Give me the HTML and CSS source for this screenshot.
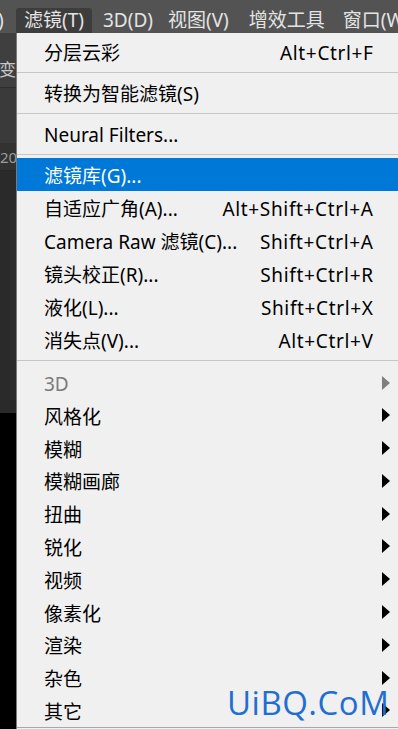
FILE: index.html
```html
<!DOCTYPE html>
<html lang="zh-CN">
<head>
<meta charset="utf-8">
<link rel="stylesheet" href="styles.css">
</head>
<body>
<div class="app">
  <div class="menubar">
    <span class="mb-item mb-cut">)</span>
    <span class="mb-item mb-active">滤镜(T)</span>
    <span class="mb-item mb-3d">3D(D)</span>
    <span class="mb-item mb-view">视图(V)</span>
    <span class="mb-item mb-plug">增效工具</span>
    <span class="mb-item mb-win">窗口(W)</span>
  </div>
  <div class="main">
    <div class="strip">
      <div class="strip-opt"><span class="strip-text">变</span></div>
      <div class="strip-opt2"></div>
      <div class="strip-ruler"><span class="ruler-text">20</span></div>
      <div class="strip-canvas"></div>
      <div class="strip-black"></div>
    </div>
    <div class="menu">
      <div class="row"><span class="label">分层云彩</span><span class="key">Alt+Ctrl+F</span><span class="sub"></span></div>
      <div class="sep"></div>
      <div class="row"><span class="label">转换为智能滤镜(S)</span><span class="key"></span><span class="sub"></span></div>
      <div class="sep"></div>
      <div class="row"><span class="label">Neural Filters...</span><span class="key"></span><span class="sub"></span></div>
      <div class="sep"></div>
      <div class="row hl"><span class="label">滤镜库(G)...</span><span class="key"></span><span class="sub"></span></div>
      <div class="row"><span class="label">自适应广角(A)...</span><span class="key">Alt+Shift+Ctrl+A</span><span class="sub"></span></div>
      <div class="row"><span class="label">Camera Raw 滤镜(C)...</span><span class="key">Shift+Ctrl+A</span><span class="sub"></span></div>
      <div class="row"><span class="label">镜头校正(R)...</span><span class="key">Shift+Ctrl+R</span><span class="sub"></span></div>
      <div class="row"><span class="label">液化(L)...</span><span class="key">Shift+Ctrl+X</span><span class="sub"></span></div>
      <div class="row"><span class="label">消失点(V)...</span><span class="key">Alt+Ctrl+V</span><span class="sub"></span></div>
      <div class="sep sep-wide"></div>
      <div class="row sm disabled"><span class="label">3D</span><span class="key"></span><span class="sub"><i class="arrow"></i></span></div>
      <div class="row sm"><span class="label">风格化</span><span class="key"></span><span class="sub"><i class="arrow"></i></span></div>
      <div class="row sm"><span class="label">模糊</span><span class="key"></span><span class="sub"><i class="arrow"></i></span></div>
      <div class="row sm"><span class="label">模糊画廊</span><span class="key"></span><span class="sub"><i class="arrow"></i></span></div>
      <div class="row sm"><span class="label">扭曲</span><span class="key"></span><span class="sub"><i class="arrow"></i></span></div>
      <div class="row sm"><span class="label">锐化</span><span class="key"></span><span class="sub"><i class="arrow"></i></span></div>
      <div class="row sm"><span class="label">视频</span><span class="key"></span><span class="sub"><i class="arrow"></i></span></div>
      <div class="row sm"><span class="label">像素化</span><span class="key"></span><span class="sub"><i class="arrow"></i></span></div>
      <div class="row sm"><span class="label">渲染</span><span class="key"></span><span class="sub"><i class="arrow"></i></span></div>
      <div class="row sm"><span class="label">杂色</span><span class="key"></span><span class="sub"><i class="arrow"></i></span></div>
      <div class="row sm"><span class="label">其它</span><span class="key"></span><span class="sub"><i class="arrow"></i></span></div>
    </div>
  </div>
  <div class="watermark">UiBQ.CoM</div>
</div>
</body>
</html>
```

FILE: styles.css
```css
html, body {
  margin: 0;
  padding: 0;
  background: #000;
}
.app {
  position: relative;
  width: 398px;
  height: 729px;
  overflow: hidden;
  font-family: "Noto Sans", "Noto Sans CJK SC", sans-serif;
  font-size: 19px;
  display: flex;
  flex-direction: column;
}
.menubar {
  height: 33px;
  flex: none;
  background: #535353;
  display: flex;
  align-items: flex-end;
  color: #e4e4e4;
  white-space: nowrap;
}
.mb-item {
  height: 25px;
  line-height: 25px;
  flex: none;
}
.mb-cut {
  width: 16px;
  margin-left: -2px;
  box-sizing: border-box;
}
.mb-active {
  width: 76px;
  box-sizing: border-box;
  padding-left: 8px;
  background: #3d3d3d;
  border-radius: 3px 3px 0 0;
  margin-left: 2px;
}
.mb-3d { margin-left: 11px; }
.mb-view { margin-left: 15px; }
.mb-plug { margin-left: 20px; }
.mb-win { margin-left: 18px; }

.main {
  flex: 1;
  display: flex;
  min-height: 0;
}
.strip {
  width: 16px;
  flex: none;
  display: flex;
  flex-direction: column;
}
.strip-opt {
  height: 54px;
  background: #3f3f3f;
  border-bottom: 1px solid #2e2e2e;
  overflow: hidden;
}
.strip-text {
  display: block;
  margin-top: 27px;
  margin-left: -1px;
  font-size: 17px;
  line-height: 20px;
  color: #c8c8c8;
}
.strip-opt2 {
  height: 55px;
  background: #3a3a3a;
}
.strip-ruler {
  height: 27px;
  background: #323232;
  overflow: hidden;
  border-bottom: 1px solid #262626;
}
.ruler-text {
  display: block;
  margin-top: 5px;
  font-size: 15px;
  line-height: 18px;
  color: #9a9a9a;
}
.strip-canvas {
  height: 242px;
  background: #2a2a2a;
}
.strip-black {
  flex: 1;
  background: #000;
}

.menu {
  flex: 1;
  background: #f0f0f0;
  border-left: 1px solid #7a7a7a;
  padding-top: 2px;
  color: #000;
  position: relative;
}
.menu::after {
  content: "";
  position: absolute;
  left: 0;
  right: 0;
  top: 694px;
  height: 1px;
  background: #a8a8a8;
}
.row {
  height: 33px;
  display: grid;
  grid-template-columns: 1fr auto 25px;
  align-items: center;
  padding-left: 27px;
  white-space: nowrap;
}
.row.sm {
  height: 32.8px;
}
.label, .key {
  line-height: 33px;
  padding-top: 2px;
  height: 33px;
  box-sizing: border-box;
}
.key {
  letter-spacing: 0.65px;
  margin-right: -0.65px;
}
.hl {
  background: #0078d7;
  color: #fff;
}
.disabled {
  color: #7a7a7a;
}
.sub {
  display: flex;
  align-items: center;
  padding-left: 9px;
}
.arrow {
  display: block;
  width: 0;
  height: 0;
  border-top: 7px solid transparent;
  border-bottom: 7px solid transparent;
  border-left: 8px solid #000;
}
.disabled .arrow {
  border-left-color: #7f7f7f;
}
.sep {
  height: 8px;
  position: relative;
}
.sep-wide {
  height: 10px;
}
.sep::after {
  content: "";
  position: absolute;
  left: 0;
  right: 0;
  top: 4px;
  height: 1px;
  background: #c6c6c6;
}
.watermark {
  position: absolute;
  left: 227px;
  top: 683px;
  font-family: "Open Sans", "Noto Sans", sans-serif;
  font-size: 33px;
  line-height: 40px;
  color: #1f6fd3;
  letter-spacing: 0.5px;
}
```
